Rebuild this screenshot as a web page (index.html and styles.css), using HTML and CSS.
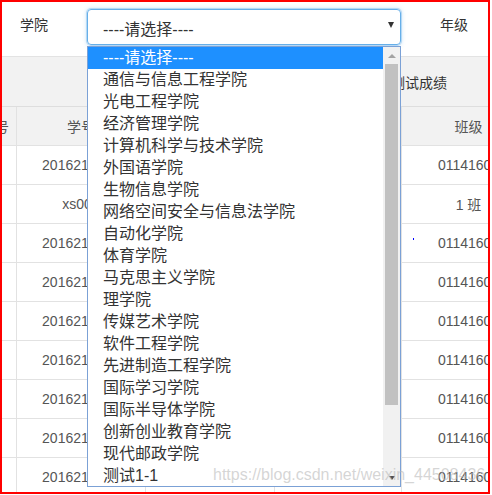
FILE: index.html
```html
<!DOCTYPE html>
<html lang="zh-CN">
<head>
    <meta charset="UTF-8">
    <meta name="viewport" content="width=device-width, initial-scale=1.0">
    <title>成绩管理</title>
    <link rel="stylesheet" href="styles.css">
</head>
<body>
    <div class="page">
        <!-- Filter row -->
        <div class="filter">
            <label class="filter-label">学院</label>
            <div class="select">
                <span>----请选择----</span>
                <span class="select-arrow"></span>
            </div>
            <label class="filter-label grade">年级</label>
        </div>

        <!-- Toolbar -->
        <div class="toolbar">
            <span class="tool-btn">导入测试成绩</span>
        </div>

        <!-- Table -->
        <div class="grid">
            <div class="cell head first">序号</div>
            <div class="cell head">学号</div>
            <div class="cell head">姓名</div>
            <div class="cell head">成绩</div>
            <div class="cell head">班级</div>

            <div class="cell first"></div><div class="cell">2016210001</div><div class="cell"></div><div class="cell"></div><div class="cell">01141601</div>
            <div class="cell first"></div><div class="cell">xs001</div><div class="cell"></div><div class="cell"></div><div class="cell">1 班</div>
            <div class="cell first"></div><div class="cell">2016210002</div><div class="cell"></div><div class="cell"></div><div class="cell">01141601</div>
            <div class="cell first"></div><div class="cell">2016210003</div><div class="cell"></div><div class="cell"></div><div class="cell">01141601</div>
            <div class="cell first"></div><div class="cell">2016210004</div><div class="cell"></div><div class="cell"></div><div class="cell">01141601</div>
            <div class="cell first"></div><div class="cell">2016210005</div><div class="cell"></div><div class="cell"></div><div class="cell">01141601</div>
            <div class="cell first"></div><div class="cell">2016210006</div><div class="cell"></div><div class="cell"></div><div class="cell">01141601</div>
            <div class="cell first"></div><div class="cell">2016210007</div><div class="cell"></div><div class="cell"></div><div class="cell">01141601</div>
            <div class="cell first"></div><div class="cell">2016210008</div><div class="cell"></div><div class="cell"></div><div class="cell">01141601</div>
        </div>

        <span class="caret-dot"></span>

        <!-- Open select list -->
        <div class="dropdown">
            <ul class="options">
                <li class="active">----请选择----</li>
                <li>通信与信息工程学院</li>
                <li>光电工程学院</li>
                <li>经济管理学院</li>
                <li>计算机科学与技术学院</li>
                <li>外国语学院</li>
                <li>生物信息学院</li>
                <li>网络空间安全与信息法学院</li>
                <li>自动化学院</li>
                <li>体育学院</li>
                <li>马克思主义学院</li>
                <li>理学院</li>
                <li>传媒艺术学院</li>
                <li>软件工程学院</li>
                <li>先进制造工程学院</li>
                <li>国际学习学院</li>
                <li>国际半导体学院</li>
                <li>创新创业教育学院</li>
                <li>现代邮政学院</li>
                <li>测试1-1</li>
            </ul>
            <div class="scrollbar">
                <div class="scroll-btn"><span class="tri-up"></span></div>
                <div class="scroll-thumb"></div>
                <div class="scroll-btn"><span class="tri-down"></span></div>
            </div>
        </div>
    </div>
    <div class="watermark">https://blog.csdn.net/weixin_44508436</div>
</body>
</html>
```

FILE: styles.css
```css
body {
    margin: 0;
    font-family: "Liberation Sans", "Noto Sans CJK SC", sans-serif;
    color: #333;
}
.page {
    position: relative;
    width: 490px;
    height: 494px;
    border: 2px solid #f00;
    box-sizing: border-box;
    overflow: hidden;
    background: #fff;
}
.filter {
    display: flex;
    align-items: flex-start;
    height: 54px;
    padding: 7px 0 0 18px;
    box-sizing: border-box;
}
.filter-label {
    font-size: 14px;
    line-height: 32px;
    width: 28px;
    white-space: nowrap;
}
.select {
    display: flex;
    justify-content: space-between;
    width: 314px;
    height: 36px;
    margin: 0 39px;
    padding: 6px 6px 0 15px;
    box-sizing: border-box;
    border: 1px solid #66afe9;
    border-radius: 4px;
    box-shadow: 0 0 0 1px rgba(102, 175, 233, 0.35), 0 0 4px rgba(102, 175, 233, 0.5);
    font-size: 16px;
    line-height: 28px;
    color: #333;
}
.select-arrow {
    margin-top: 6px;
    width: 0;
    height: 0;
    border-left: 3.5px solid transparent;
    border-right: 3.5px solid transparent;
    border-top: 6px solid #333;
}
.toolbar {
    display: flex;
    justify-content: flex-end;
    height: 51px;
    padding: 4px 41px 0 0;
    box-sizing: border-box;
    background: #f2f2f2;
    border-top: 1px solid #e3e3e3;
    border-bottom: 1px solid #dedede;
}
.tool-btn {
    font-size: 14px;
    line-height: 44px;
    color: #333;
    white-space: nowrap;
}
.grid {
    display: grid;
    grid-template-columns: 15px 129px 129px 127px 134px;
    grid-auto-rows: 39px;
    width: 534px;
}
.cell {
    display: flex;
    align-items: center;
    justify-content: center;
    border-right: 1px solid #e2e2e2;
    border-bottom: 1px solid #e2e2e2;
    box-sizing: border-box;
    font-size: 14px;
    color: #555;
    white-space: nowrap;
    overflow: hidden;
}
.cell.head {
    background: #f2f2f2;
}
.cell.first {
    justify-content: flex-end;
    padding-right: 7px;
}
.caret-dot {
    position: absolute;
    left: 411px;
    top: 236px;
    width: 1px;
    height: 2px;
    background: #00f;
}
.dropdown {
    position: absolute;
    left: 85px;
    top: 44px;
    width: 314px;
    height: 441px;
    display: flex;
    border: 1px solid #7ba1d6;
    box-sizing: border-box;
    background: #fff;
}
.options {
    flex: 1;
    margin: 0;
    padding: 0;
    list-style: none;
}
.options li {
    height: 22px;
    line-height: 22px;
    padding-left: 15px;
    font-size: 16px;
    color: #333;
    white-space: nowrap;
}
.options li.active {
    background: #1e90ff;
    color: #fff;
}
.scrollbar {
    display: flex;
    flex-direction: column;
    justify-content: space-between;
    width: 17px;
    background: #f1f1f1;
}
.scroll-btn {
    display: flex;
    align-items: center;
    justify-content: center;
    height: 17px;
}
.scroll-thumb {
    height: 341px;
    margin: 0 2px auto;
    background: #c1c1c1;
}
.tri-up {
    border-left: 4px solid transparent;
    border-right: 4px solid transparent;
    border-bottom: 4px solid #a3a3a3;
}
.tri-down {
    border-left: 3px solid transparent;
    border-right: 3px solid transparent;
    border-top: 4px solid #505050;
}
.watermark {
    position: absolute;
    left: 213px;
    top: 466px;
    font-size: 16px;
    color: rgba(185, 185, 185, 0.6);
    white-space: nowrap;
}
```
